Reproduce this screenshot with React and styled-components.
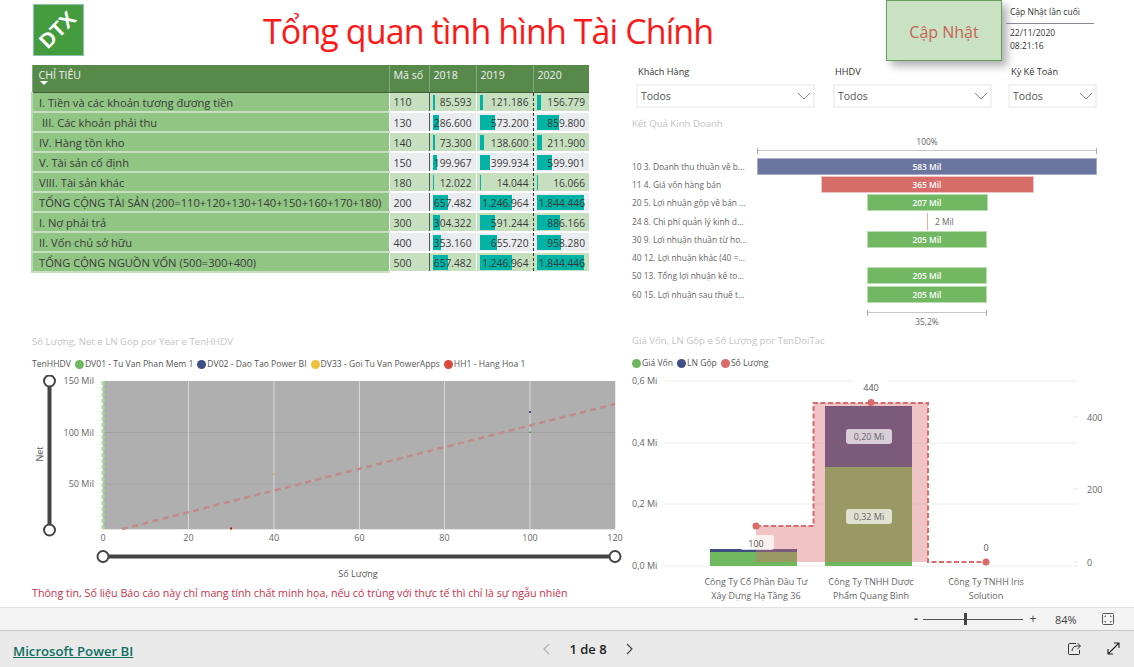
import React from "react";
import styled, { createGlobalStyle } from "styled-components";

const Global = createGlobalStyle`
  html, body { margin: 0; padding: 0; background: #fff; }
  body { font-family: "Open Sans", "Noto Sans", sans-serif; }
  * { box-sizing: border-box; }
`;

const Page = styled.div`
  width: 1134px;
  height: 667px;
  overflow: hidden;
  display: flex;
  flex-direction: column;
`;

const Report = styled.main`
  height: 607px;
  display: grid;
  grid-template-columns: 590px 1fr;
  grid-template-rows: 65px 1fr;
`;

const Header = styled.header`
  grid-column: 1 / 3;
  display: flex;
  align-items: flex-start;
`;

const Logo = styled.div`
  width: 51px;
  height: 52px;
  margin: 4px 0 0 33px;
  background: #449c3f;
  border: 1px solid #8cc0b0;
  display: flex;
  align-items: center;
  justify-content: center;
  overflow: hidden;
`;

const LogoText = styled.span`
  color: #fff;
  font: 700 21px "Liberation Sans", sans-serif;
  transform: rotate(-45deg) translate(-1px, -1px);
`;

const Title = styled.h1`
  width: 450px;
  margin: 7px 0 0 179px;
  font: 400 34px/48px "Open Sans", sans-serif;
  letter-spacing: -0.9px;
  color: #fb1a1a;
  white-space: nowrap;
`;

const UpdateButton = styled.button`
  width: 116px;
  height: 61px;
  margin-left: 173px;
  background: #c8e2c2;
  border: 1px solid #659c5c;
  box-shadow: 5px 5px 8px rgba(60, 60, 70, 0.4);
  color: #c9625a;
  font: 400 16px "Open Sans", sans-serif;
  padding: 2px 0 0;
`;

const LastUpdate = styled.div`
  width: 88px;
  margin-left: 4px;
  font-size: 8.5px;
  color: #333;
`;

const LastTitle = styled.div`
  height: 24px;
  padding: 5px 0 0 4px;
  line-height: 13px;
  border-bottom: 1px solid #8a8a96;
  white-space: nowrap;
`;

const LastValue = styled.div`
  padding: 2px 0 0 4px;
  line-height: 13px;
`;

const LeftColumn = styled.section`
  padding-left: 31px;
  display: flex;
  flex-direction: column;
`;

const RightColumn = styled.section`
  padding-left: 42px;
  display: flex;
  flex-direction: column;
`;

const Table = styled.table`
  width: 557px;
  border-collapse: collapse;
  table-layout: fixed;
  font-size: 10.6px;
  color: #3a3a3a;
`;

const HeadCell = styled.th`
  height: 27px;
  padding: 3px 0 0 ${(p) => p.$pad || 4}px;
  background: #56894a;
  color: #f2f2f2;
  font-weight: 400;
  text-align: left;
  vertical-align: top;
  line-height: 15px;
  border-left: 1px solid #87ad7f;
  border-bottom: 1px solid #3d5f37;
  white-space: nowrap;
`;

const SortMark = styled.div`
  width: 0;
  height: 0;
  margin: -2px 0 0 1px;
  border-left: 4px solid transparent;
  border-right: 4px solid transparent;
  border-top: 4px solid #fff;
`;

const NameCell = styled.td`
  height: 20px;
  padding: 1px 0 0 ${(p) => p.$pad}px;
  background: #90c583;
  font-size: 11.15px;
  border-left: 2px solid #b7dbae;
  border-bottom: 2px solid #c6e0bf;
  white-space: nowrap;
  overflow: hidden;
`;

const CodeCell = styled.td`
  padding: 1px 0 0 4px;
  background: ${(p) => (p.$alt ? "#ebecef" : "#c6e0bf")};
  border-left: 1px solid #fff;
  border-bottom: 2px solid #fff;
`;

const ValueCell = styled.td`
  padding: 1px 4px 0 0;
  font-size: 10.2px;
  text-align: right;
  white-space: nowrap;
  background-color: ${(p) => (p.$alt ? "#ebecef" : "#c6e0bf")};
  background-image: linear-gradient(#00b3a4, #00b3a4);
  background-repeat: no-repeat;
  background-position: 3px 2px;
  background-size: ${(p) => p.$bar}px 15px;
  border-left: 1px ${(p) => p.$line} ${(p) => p.$lineColor};
  border-bottom: 2px solid #fff;
`;

const ChartTitle = styled.div`
  font-size: 9.6px;
  line-height: 13px;
  color: #c4c4c4;
  white-space: nowrap;
`;

const ScatterBlock = styled.div`
  margin-top: 62px;
  padding-left: 1px;
  display: flex;
  flex-direction: column;
`;

const Legend = styled.div`
  display: flex;
  align-items: center;
  gap: 4px;
  margin-top: 10px;
  font-size: 8.6px;
  line-height: 13px;
  color: #555;
  white-space: nowrap;
`;

const LegendItem = styled.span`
  display: inline-flex;
  align-items: center;
  gap: 1px;
`;

const Dot = styled.i`
  width: 9px;
  height: 9px;
  border-radius: 50%;
  background: ${(p) => p.$c};
`;

const ChartSvg = styled.svg`
  display: block;
  margin-top: ${(p) => p.$top}px;
  margin-left: ${(p) => p.$left}px;
  font-family: "Open Sans", sans-serif;
`;

const Notice = styled.div`
  margin-top: 7px;
  font-size: 10.7px;
  line-height: 14px;
  color: #c8324a;
  white-space: nowrap;
`;

const Slicers = styled.div`
  display: flex;
  height: 42px;
`;

const Slicer = styled.div`
  width: ${(p) => p.$w}px;
  margin-right: ${(p) => p.$gap}px;
  margin-left: ${(p) => p.$left}px;
`;

const SlicerLabel = styled.div`
  padding-left: ${(p) => p.$pad}px;
  font-size: 9.2px;
  line-height: 14px;
  color: #333;
  white-space: nowrap;
`;

const SlicerBox = styled.div`
  height: 24px;
  margin-top: 5px;
  border: 2px solid #f2f2f2;
  display: flex;
  align-items: center;
  justify-content: space-between;
  padding: 0 2px 0 3px;
  font-size: 10.5px;
  color: #555;
`;

const Funnel = styled.div`
  margin-top: 10px;
`;

const FunnelTitle = styled(ChartTitle)`
  margin-bottom: 6px;
`;

const Bracket = styled.div`
  width: ${(p) => p.$w}px;
  margin-left: ${(p) => 295 - p.$w / 2}px;
  height: 6px;
  border-left: 1px solid #a8a8a8;
  border-right: 1px solid #a8a8a8;
  background: linear-gradient(#c8c8c8, #c8c8c8) no-repeat 0 2px / 100% 1px;
`;

const BracketLabel = styled.div`
  width: 340px;
  margin-left: 125px;
  text-align: center;
  font-size: 8.4px;
  line-height: 12px;
  color: #666;
`;

const FunnelRows = styled.div`
  margin: 3px 0 7px;
  display: flex;
  flex-direction: column;
`;

const FunnelRow = styled.div`
  height: 18.3px;
  display: grid;
  grid-template-columns: 125px 340px;
  align-items: center;
`;

const FunnelLabel = styled.div`
  font-size: 8.4px;
  color: #666;
  white-space: nowrap;
  overflow: hidden;
`;

const FunnelTrack = styled.div`
  display: flex;
  justify-content: center;
  align-items: center;
  position: relative;
`;

const FunnelBar = styled.div`
  width: ${(p) => p.$w}px;
  height: 17px;
  background: ${(p) => p.$c};
  border: 1px solid ${(p) => p.$b};
  color: #fff;
  font-size: 8.4px;
  font-weight: 600;
  line-height: 15px;
  text-align: center;
  white-space: nowrap;
`;

const ThinBar = styled.div`
  width: 1px;
  height: 17px;
  background: #eeb09a;
`;

const ThinLabel = styled.span`
  position: absolute;
  left: 178px;
  font-size: 8.4px;
  color: #666;
`;

const ComboBlock = styled.div`
  margin-top: 6px;
  display: flex;
  flex-direction: column;
`;

const ZoomBar = styled.div`
  height: 24px;
  background: #f3f3f3;
  border-top: 1px solid #e2e2e2;
  border-bottom: 1px solid #c8c8c8;
  display: flex;
  align-items: center;
  justify-content: flex-end;
  font-size: 11px;
  color: #444;
`;

const ZoomSign = styled.span`
  width: 10px;
  text-align: center;
  font-size: 12px;
  font-weight: ${(p) => (p.$bold ? 700 : 400)};
  line-height: 12px;
`;

const ZoomTrack = styled.div`
  width: 100px;
  height: 1px;
  margin: 0 5px 0 2px;
  background: #555;
  display: flex;
  align-items: center;
  padding-left: 41px;
`;

const ZoomThumb = styled.i`
  width: 3px;
  height: 12px;
  background: #444;
`;

const ZoomValue = styled.span`
  width: 24px;
  margin: 0 22px 0 17px;
`;

const FitIcon = styled.svg`
  margin-right: 19px;
`;

const Footer = styled.footer`
  flex: 1;
  background: #e9e9e9;
  display: grid;
  grid-template-columns: 1fr auto 1fr;
  align-items: center;
  padding: 1px 13px 0;
`;

const BrandLink = styled.a`
  color: #0e6f63;
  font-size: 13.2px;
  font-weight: 600;
  text-decoration: underline;
  white-space: nowrap;
`;

const Pager = styled.div`
  display: flex;
  align-items: center;
  gap: 19px;
  margin: -2px 0 0 42px;
  font-size: 13px;
  font-weight: 600;
  color: #222;
`;

const FooterIcons = styled.div`
  display: flex;
  justify-content: flex-end;
  gap: 24px;
  margin-top: -2px;
`;

const rows = [
  ["I. Tiền và các khoản tương đương tiền", 4, "110", "85.593", "121.186", "156.779"],
  ["III. Các khoản phải thu", 7, "130", "286.600", "573.200", "859.800"],
  ["IV. Hàng tồn kho", 4, "140", "73.300", "138.600", "211.900"],
  ["V. Tài sản cố định", 4, "150", "199.967", "399.934", "599.901"],
  ["VIII. Tài sản khác", 4, "180", "12.022", "14.044", "16.066"],
  ["TỔNG CỘNG TÀI SẢN (200=110+120+130+140+150+160+170+180)", 4, "200", "657.482", "1.246.964", "1.844.446"],
  ["I. Nợ phải trả", 4, "300", "304.322", "591.244", "886.166"],
  ["II. Vốn chủ sở hữu", 4, "400", "353.160", "655.720", "958.280"],
  ["TỔNG CỘNG NGUỒN VỐN  (500=300+400)", 4, "500", "657.482", "1.246.964", "1.844.446"],
];

const barWidth = (text, scale) => Math.max(1, Math.round(Number(text.replace(/\./g, "")) * scale));
const SCALE_2018 = 14.5 / 657482;
const SCALE_OTHER = 47 / 1844446;

const funnel = [
  ["10 3. Doanh thu thuần về b...", 340, "583 Mil", "#6b76a0", "#a6adc6"],
  ["11 4. Giá vốn hàng bán", 213, "365 Mil", "#d76d69", "#f0c4c2"],
  ["20 5. Lợi nhuận gộp về bán ...", 121, "207 Mil", "#72b762", "#b9dcb1"],
  ["24 8. Chi phí quản lý kinh d...", 0, "2 Mil"],
  ["30 9. Lợi nhuận thuần từ ho...", 120, "205 Mil", "#72b762", "#b9dcb1"],
  ["40 12. Lợi nhuận khác (40 =...", -1, ""],
  ["50 13. Tổng lợi nhuận kế to...", 120, "205 Mil", "#72b762", "#b9dcb1"],
  ["60 15. Lợi nhuận sau thuế t...", 120, "205 Mil", "#72b762", "#b9dcb1"],
];

function Chevron() {
  return (
    <svg width="14" height="8" viewBox="0 0 14 8" fill="none" stroke="#888" strokeWidth="1">
      <path d="M1 1l6 6 6-6" />
    </svg>
  );
}

function ScatterChart() {
  const xTicks = [[0, 103], [20, 188.5], [40, 274], [60, 359.5], [80, 444.5], [100, 530], [120, 615]];
  return (
    <ChartSvg $top={4} $left={-1} width="600" height="204" viewBox="31 375 600 204">
      <text x="43" y="454" fontSize="9" fill="#555" textAnchor="middle" transform="rotate(-90 43 454)">Net</text>
      <line x1="49.5" y1="381" x2="49.5" y2="530" stroke="#444" strokeWidth="4" />
      <circle cx="49.5" cy="381" r="5.5" fill="#fff" stroke="#444" strokeWidth="2" />
      <circle cx="49.5" cy="530" r="5.5" fill="#fff" stroke="#444" strokeWidth="2" />
      {[["150 Mil", 384], ["100 Mil", 436], ["50 Mil", 487]].map(([t, y]) => (
        <text key={t} x="94" y={y} fontSize="9" fill="#666" textAnchor="end">{t}</text>
      ))}
      <rect x="103" y="381" width="512" height="148" fill="#afafaf" />
      <line x1="103" y1="432.5" x2="615" y2="432.5" stroke="#a2a2a2" />
      <line x1="103" y1="484" x2="615" y2="484" stroke="#a2a2a2" />
      {xTicks.slice(1, 6).map(([t, x]) => (
        <line key={t} x1={x} y1="381" x2={x} y2="529" stroke="#d9d9d9" strokeWidth="1" />
      ))}
      <line x1="615.5" y1="381" x2="615.5" y2="530" stroke="#ececec" />
      <line x1="103" y1="529.5" x2="615" y2="529.5" stroke="#e6e6e6" />
      <line x1="103" y1="381" x2="103" y2="529" stroke="#a9dba0" strokeWidth="3" strokeDasharray="4 2" />
      <line x1="122" y1="529" x2="615" y2="404" stroke="#c28a8a" strokeWidth="2.5" strokeDasharray="6 4.5" />
      <rect x="529" y="411" width="2" height="2" fill="#3f4f85" />
      <rect x="529" y="431.5" width="2" height="1.5" fill="#55a045" />
      <rect x="273" y="473" width="1.5" height="1.5" fill="#d8a83a" />
      <rect x="230" y="527.5" width="2" height="2" fill="#b01818" />
      {xTicks.map(([t, x]) => (
        <text key={t} x={x} y="541" fontSize="9" fill="#666" textAnchor="middle">{t}</text>
      ))}
      <line x1="103" y1="556.5" x2="615" y2="556.5" stroke="#444" strokeWidth="4" />
      <circle cx="103" cy="556.5" r="5.5" fill="#fff" stroke="#444" strokeWidth="2" />
      <circle cx="615" cy="556.5" r="5.5" fill="#fff" stroke="#444" strokeWidth="2" />
      <text x="358" y="577" fontSize="9" fill="#555" textAnchor="middle">Số Lượng</text>
    </ChartSvg>
  );
}

function ComboChart() {
  return (
    <ChartSvg $top={5} $left={0} width="502" height="236" viewBox="632 375 502 236">
      {[381, 443, 504, 566].map((y) => (
        <line key={y} x1="664" y1={y} x2="1078" y2={y} stroke="#eeeeee" strokeWidth="1" />
      ))}
      {[["0,6 Mi", 384], ["0,4 Mi", 446], ["0,2 Mi", 507], ["0,0 Mi", 569]].map(([t, y]) => (
        <text key={t} x="632" y={y} fontSize="9" fill="#666">{t}</text>
      ))}
      {[["400", 421, 417], ["200", 493, 489], ["0", 566, 562]].map(([t, y, ty]) => (
        <g key={t}>
          <line x1="1073" y1={ty} x2="1078" y2={ty} stroke="#e8e8e8" />
          <text x="1087" y={y} fontSize="9" fill="#666">{t}</text>
        </g>
      ))}
      <rect x="710" y="552" width="87" height="14" fill="#6fb85f" />
      <rect x="710" y="549" width="87" height="3" fill="#3f4f85" />
      <rect x="825" y="467" width="87" height="99" fill="#6fb85f" />
      <rect x="825" y="406" width="87" height="61" fill="#3f4f85" />
      <path d="M756 562V526H813.5V403H928V562Z" fill="#d96b6b" fillOpacity="0.4" />
      <path d="M756 526H813.5V403H928V562H986" fill="none" stroke="#d96b6b" strokeWidth="2" strokeDasharray="5 2.5" />
      <circle cx="756" cy="526" r="3.5" fill="#d96b6b" />
      <circle cx="871" cy="402.5" r="3.5" fill="#d96b6b" />
      <circle cx="986" cy="562" r="3.5" fill="#d96b6b" />
      <rect x="740" y="535" width="34" height="15" rx="3" fill="#fff" fillOpacity="0.75" />
      <text x="756" y="547" fontSize="9" fill="#555" textAnchor="middle">100</text>
      <rect x="846" y="429" width="46" height="15" rx="3" fill="#fff" fillOpacity="0.7" />
      <text x="869" y="440" fontSize="9" fill="#666" textAnchor="middle">0,20 Mi</text>
      <rect x="846" y="509" width="46" height="15" rx="3" fill="#fff" fillOpacity="0.7" />
      <text x="869" y="520" fontSize="9" fill="#666" textAnchor="middle">0,32 Mi</text>
      <rect x="854" y="379" width="34" height="13" fill="#fff" />
      <text x="871" y="391" fontSize="9" fill="#555" textAnchor="middle">440</text>
      <text x="986" y="551" fontSize="9" fill="#555" textAnchor="middle">0</text>
      {[
        [756, "Công Ty Cổ Phần Đầu Tư", "Xây Dựng Hạ Tầng 36"],
        [871, "Công Ty TNHH Dược", "Phẩm Quang Bình"],
        [986, "Công Ty TNHH Iris", "Solution"],
      ].map(([x, a, b]) => (
        <g key={a}>
          <text x={x} y="585" fontSize="9" fill="#666" textAnchor="middle">{a}</text>
          <text x={x} y="598.5" fontSize="9" fill="#666" textAnchor="middle">{b}</text>
        </g>
      ))}
    </ChartSvg>
  );
}

export default function App() {
  return (
    <Page>
      <Global />
      <Report>
        <Header>
          <Logo><LogoText>DTX</LogoText></Logo>
          <Title>Tổng quan tình hình Tài Chính</Title>
          <UpdateButton>Cập Nhật</UpdateButton>
          <LastUpdate>
            <LastTitle>Cập Nhật lần cuối</LastTitle>
            <LastValue>22/11/2020<br />08:21:16</LastValue>
          </LastUpdate>
        </Header>
        <LeftColumn>
          <Table>
            <colgroup>
              <col width="357" /><col width="40" /><col width="47" /><col width="57" /><col width="56" />
            </colgroup>
            <thead>
              <tr>
                <HeadCell $pad={6}>CHỈ TIÊU<SortMark /></HeadCell>
                <HeadCell>Mã số</HeadCell>
                <HeadCell>2018</HeadCell>
                <HeadCell>2019</HeadCell>
                <HeadCell>2020</HeadCell>
              </tr>
            </thead>
            <tbody>
              {rows.map(([name, pad, code, a, b, c], i) => (
                <tr key={code}>
                  <NameCell $pad={pad + 2}>{name}</NameCell>
                  <CodeCell $alt={i % 2 === 1}>{code}</CodeCell>
                  <ValueCell $alt={i % 2 === 1} $bar={barWidth(a, SCALE_2018)} $line="solid" $lineColor="#555">{a}</ValueCell>
                  <ValueCell $alt={i % 2 === 1} $bar={barWidth(b, SCALE_OTHER)} $line="solid" $lineColor="#fff">{b}</ValueCell>
                  <ValueCell $alt={i % 2 === 1} $bar={barWidth(c, SCALE_OTHER)} $line="dashed" $lineColor="#333">{c}</ValueCell>
                </tr>
              ))}
            </tbody>
          </Table>
          <ScatterBlock>
            <ChartTitle>Số Lượng, Net e LN Gop por Year e TenHHDV</ChartTitle>
            <Legend>
              <span>TenHHDV</span>
              <LegendItem><Dot $c="#6fb85f" />DV01 - Tu Van Phan Mem 1</LegendItem>
              <LegendItem><Dot $c="#3f4f85" />DV02 - Dao Tao Power BI</LegendItem>
              <LegendItem><Dot $c="#eebf3e" />DV33 - Goi Tu Van PowerApps</LegendItem>
              <LegendItem><Dot $c="#d9483f" />HH1 - Hang Hoa 1</LegendItem>
            </Legend>
            <ScatterChart />
            <Notice>Thông tin, Số liệu Báo cáo này chỉ mang tính chất minh họa, nếu có trùng với thực tế thì chỉ là sự ngẫu nhiên</Notice>
          </ScatterBlock>
        </LeftColumn>
        <RightColumn>
          <Slicers>
            <Slicer $w={179} $gap={18} $left={4}>
              <SlicerLabel $pad={2}>Khách Hàng</SlicerLabel>
              <SlicerBox>Todos<Chevron /></SlicerBox>
            </Slicer>
            <Slicer $w={159} $gap={16} $left={0}>
              <SlicerLabel $pad={2}>HHDV</SlicerLabel>
              <SlicerBox>Todos<Chevron /></SlicerBox>
            </Slicer>
            <Slicer $w={89} $gap={0} $left={0}>
              <SlicerLabel $pad={3}>Kỳ Kế Toán</SlicerLabel>
              <SlicerBox>Todos<Chevron /></SlicerBox>
            </Slicer>
          </Slicers>
          <Funnel>
            <FunnelTitle>Kết Quả Kinh Doanh</FunnelTitle>
            <BracketLabel>100%</BracketLabel>
            <Bracket $w={340} />
            <FunnelRows>
              {funnel.map(([label, w, value, c, b]) => (
                <FunnelRow key={label}>
                  <FunnelLabel>{label}</FunnelLabel>
                  <FunnelTrack>
                    {w > 0 && <FunnelBar $w={w} $c={c} $b={b}>{value}</FunnelBar>}
                    {w === 0 && <><ThinBar /><ThinLabel>{value}</ThinLabel></>}
                  </FunnelTrack>
                </FunnelRow>
              ))}
            </FunnelRows>
            <Bracket $w={120} />
            <BracketLabel>35,2%</BracketLabel>
          </Funnel>
          <ComboBlock>
            <ChartTitle>Giá Vốn, LN Gộp e Số Lượng por TenDoiTac</ChartTitle>
            <Legend>
              <LegendItem><Dot $c="#6fb85f" />Giá Vốn</LegendItem>
              <LegendItem><Dot $c="#3f4f85" />LN Gộp</LegendItem>
              <LegendItem><Dot $c="#d96b6b" />Số Lượng</LegendItem>
            </Legend>
            <ComboChart />
          </ComboBlock>
        </RightColumn>
      </Report>
      <ZoomBar>
        <ZoomSign $bold>-</ZoomSign>
        <ZoomTrack><ZoomThumb /></ZoomTrack>
        <ZoomSign>+</ZoomSign>
        <ZoomValue>84%</ZoomValue>
        <FitIcon width="14" height="12" viewBox="0 0 14 12" fill="none" stroke="#555">
          <rect x="1.5" y="0.5" width="11" height="11" rx="1" />
          <path d="M4 4V3h1M9 3h1v1M10 8v1H9M5 9H4V8" />
        </FitIcon>
      </ZoomBar>
      <Footer>
        <div><BrandLink href="#">Microsoft Power BI</BrandLink></div>
        <Pager>
          <svg width="8" height="12" viewBox="0 0 8 12" fill="none" stroke="#b0b0b0" strokeWidth="1.2"><path d="M7 1L2 6l5 5" /></svg>
          <span>1 de 8</span>
          <svg width="8" height="12" viewBox="0 0 8 12" fill="none" stroke="#444" strokeWidth="1.2"><path d="M1 1l5 5-5 5" /></svg>
        </Pager>
        <FooterIcons>
          <svg width="15" height="15" viewBox="0 0 15 15" fill="none" stroke="#333" strokeWidth="1">
            <path d="M9 2.5H2.5a1 1 0 0 0-1 1v9a1 1 0 0 0 1 1h9a1 1 0 0 0 1-1V9" />
            <path d="M5 10c0-3 2-5 5-5h3M10.5 2L13.5 5l-3 3" />
          </svg>
          <svg width="15" height="15" viewBox="0 0 15 15" fill="none" stroke="#222" strokeWidth="1.1">
            <path d="M2 13L13 2M8 2h5v5M2 8v5h5" />
          </svg>
        </FooterIcons>
      </Footer>
    </Page>
  );
}
